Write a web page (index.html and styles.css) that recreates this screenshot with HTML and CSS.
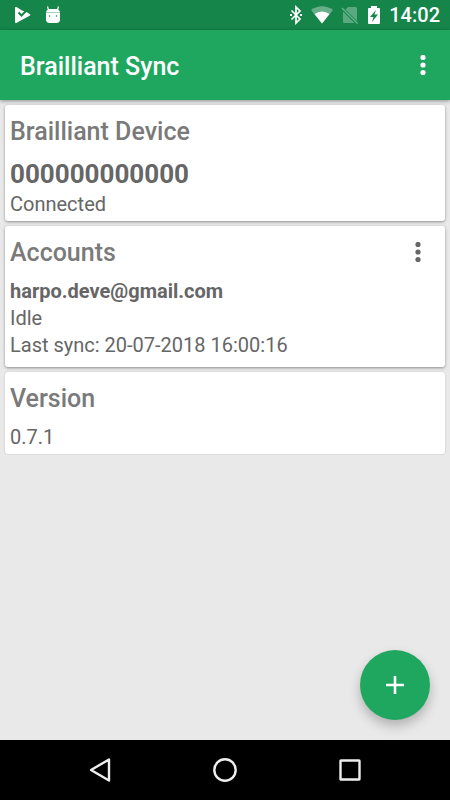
FILE: index.html
```html
<!DOCTYPE html>
<html lang="en">
<head>
<meta charset="utf-8">
<meta name="viewport" content="width=device-width, initial-scale=1">
<title>Brailliant Sync</title>
<link rel="stylesheet" href="styles.css">
</head>
<body>
<div class="status-bar">
  <div class="status-group">
    <svg width="18" height="18" viewBox="0 0 18 18" aria-hidden="true"><path fill="#fff" d="M1 2Q1 .5 2.500 1L8 4.500 12.500 6 16 8.300q1 .7 0 1.200L2.300 16.900Q1 17.500 1 16z"/><path d="M4.500 6.500 7.500 9.500 13 4" fill="none" stroke="#15854a" stroke-width="2"/></svg>
    <svg width="18" height="18" viewBox="0 0 18 18" aria-hidden="true"><path d="M4.500 4 3.500.5M13.500 4l1-3.500" stroke="#fff" stroke-width="1.200"/><path fill="#fff" d="M2 6.500Q2.500 3 6 3h6q3.500 0 4 3.500v7q0 3.500-4 3.500H6q-4 0-4-3.500z"/><path d="M2 6.500h14" stroke="#a5d0b8" stroke-width="1"/><circle cx="5.500" cy="10" r=".8" fill="#15854a"/><circle cx="12.500" cy="10" r=".8" fill="#15854a"/></svg>
  </div>
  <div class="status-group status-right">
    <svg width="14" height="20" viewBox="0 0 14 20" aria-hidden="true"><path d="m2.500 5.500 8.500 8.500-4 4V2l4 4-8.500 8.500" fill="none" stroke="#fff" stroke-width="1.700"/><path d="M1 9h2v2H1zM11 9h2v2h-2z" fill="#fff"/></svg>
    <svg width="22" height="20" viewBox="0 0 22 20" aria-hidden="true"><path fill="#fff" fill-opacity=".35" d="M0 5Q11-2.500 22 5L11 18.500z"/><path fill="#fff" d="M3.500 9Q11 4 18.500 9L11 18.500z"/></svg>
    <svg width="18" height="20" viewBox="0 0 18 20" aria-hidden="true"><path fill="#fff" fill-opacity=".3" d="M7 2h7.500Q16 2 16 3.500V16L4.500 4.500zM2 6.500 13.500 18h-10Q2 18 2 16.500z"/><path d="m1 3 15.500 15.500" stroke="#fff" stroke-opacity=".35" stroke-width="1.400"/></svg>
    <svg width="14" height="20" viewBox="0 0 14 20" aria-hidden="true"><path fill="#fff" d="M4 1h6v2h2q1 0 1 1v14q0 1-1 1H2q-1 0-1-1V4q0-1 1-1h2z"/><path fill="#15854a" d="M9 5 3 12h3.500L5 17l6-7.500H7.500z"/></svg>
    <time class="clock">14:02</time>
  </div>
</div>
<header class="app-bar">
  <h1 class="app-title">Brailliant Sync</h1>
  <button class="menu-button" type="button" aria-label="More options"><svg width="6" height="22" viewBox="0 0 6 22" fill="currentColor"><circle cx="3" cy="2.500" r="2.600"/><circle cx="3" cy="10" r="2.600"/><circle cx="3" cy="17.500" r="2.600"/></svg></button>
</header>
<main class="content">
  <section class="card">
    <h2 class="card-title">Brailliant Device</h2>
    <p class="serial">000000000000</p>
    <p class="line">Connected</p>
  </section>
  <section class="card card-list">
    <div class="card-head">
      <h2 class="card-title">Accounts</h2>
      <button class="menu-button menu-dark" type="button" aria-label="Account options"><svg width="6" height="22" viewBox="0 0 6 22" fill="currentColor"><circle cx="3" cy="2.500" r="2.600"/><circle cx="3" cy="10" r="2.600"/><circle cx="3" cy="17.500" r="2.600"/></svg></button>
    </div>
    <p class="line account">harpo.deve@gmail.com</p>
    <p class="line">Idle</p>
    <p class="line">Last sync: 20-07-2018 16:00:16</p>
  </section>
  <section class="card">
    <h2 class="card-title">Version</h2>
    <p class="line">0.7.1</p>
  </section>
  <button class="fab" type="button" aria-label="Add account"><svg width="18" height="18" viewBox="0 0 18 18"><path d="M9 0v18M0 9h18" stroke="#fff" stroke-width="2.600"/></svg></button>
</main>
<nav class="nav-bar" aria-label="System navigation">
  <button class="nav-button" type="button" aria-label="Back"><svg width="26" height="26" viewBox="0 0 26 26"><path d="M22 2.500v21L4 13z"/></svg></button>
  <button class="nav-button" type="button" aria-label="Home"><svg width="26" height="26" viewBox="0 0 26 26"><circle cx="13" cy="13" r="10.700"/></svg></button>
  <button class="nav-button" type="button" aria-label="Overview"><svg width="26" height="26" viewBox="0 0 26 26"><rect x="3.500" y="3.500" width="19" height="19" rx=".5"/></svg></button>
</nav>
</body>
</html>
```
FILE: styles.css
```css
* {
  box-sizing: border-box;
}

body {
  margin: 0;
  min-height: 100vh;
  display: flex;
  flex-direction: column;
  background: #e9e9e9;
  color: #666;
  font-family: Roboto, sans-serif;
  font-size: 20px;
  line-height: 27px;
}

h1, h2, p {
  margin: 0;
}

button {
  display: flex;
  align-items: center;
  justify-content: center;
  padding: 0;
  border: 0;
  background: none;
  color: inherit;
}

.status-bar {
  display: flex;
  align-items: center;
  justify-content: space-between;
  height: 30px;
  padding: 0 10px 0 14px;
  background: #15854a;
  color: #fff;
}

.status-group {
  display: flex;
  align-items: center;
  gap: 12px;
}

.status-right {
  gap: 8px;
}

.clock {
  font-size: 20px;
  font-weight: 500;
}

.app-bar {
  position: relative;
  display: flex;
  align-items: center;
  justify-content: space-between;
  height: 70px;
  padding: 2px 12px 0 20px;
  background: #1fa75f;
  color: #fff;
  box-shadow: 0 1px 4px rgba(0, 0, 0, 0.4);
}

.app-title {
  font-size: 25px;
  font-weight: 500;
}

.menu-button {
  width: 30px;
  height: 32px;
}

.menu-dark {
  color: #666;
}

.content {
  position: relative;
  flex: 1;
  display: flex;
  flex-direction: column;
  gap: 5px;
  padding: 5px;
}

.card {
  padding: 11px 5px 3px;
  border-radius: 3px;
  background: #fff;
  box-shadow: 0 1px 3px rgba(0, 0, 0, 0.4);
}

.card:last-of-type {
  box-shadow: 0 0 2px rgba(0, 0, 0, 0.2);
}

.card-list {
  padding-bottom: 8px;
}

.card-head {
  display: flex;
  justify-content: space-between;
  padding-right: 7px;
}

.card-title {
  margin-bottom: 9px;
  color: #7a7a7a;
  font-size: 25px;
  font-weight: 500;
  line-height: 32px;
}

.serial {
  font-size: 26px;
  font-weight: 700;
  line-height: 34px;
}

.account {
  font-weight: 700;
}

.fab {
  position: absolute;
  right: 20px;
  bottom: 20px;
  width: 70px;
  height: 70px;
  border-radius: 50%;
  background: #1fa75f;
  box-shadow: 0 6px 12px rgba(0, 0, 0, 0.24);
}

.nav-bar {
  display: flex;
  justify-content: center;
  gap: 65px;
  height: 60px;
  background: #000;
}

.nav-button {
  width: 60px;
}

.nav-button svg {
  fill: none;
  stroke: #eee;
  stroke-width: 2.4;
  stroke-linejoin: round;
}
```
